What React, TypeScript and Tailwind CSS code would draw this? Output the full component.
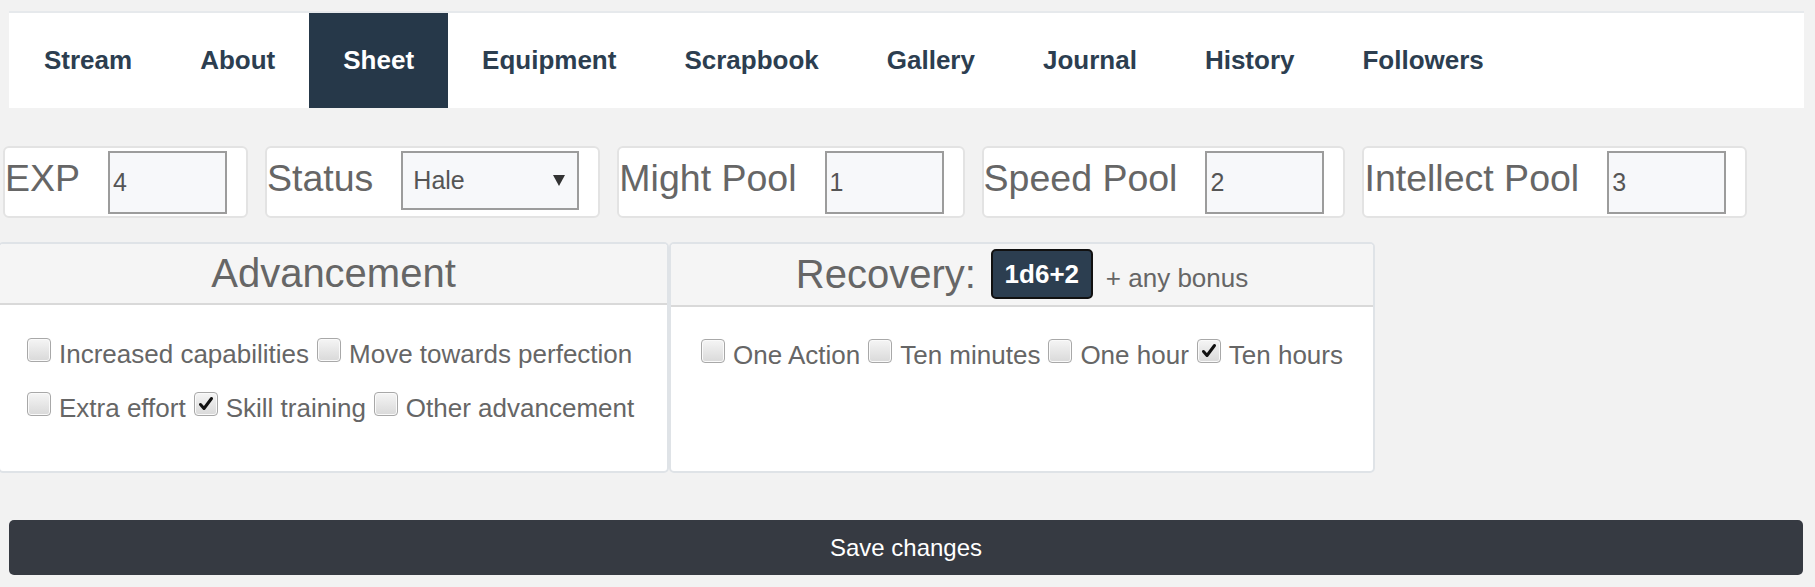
import React from "react";

const navItems = ["Stream", "About", "Sheet", "Equipment", "Scrapbook", "Gallery", "Journal", "History", "Followers"];

function Check({ checked }: { checked?: boolean }) {
  return (
    <span className="relative flex h-[24px] w-[24px] shrink-0 items-center justify-center rounded-[4px] border-[1.5px] border-[#a8a8a8] bg-gradient-to-b from-[#f5f5f5] to-[#d9d9d9] shadow-[inset_0_0_0_1px_#fafafa] mb-[9px]">
      {checked && (
        <svg width="18" height="18" viewBox="0 0 18 18">
          <path d="M3.5 9.5 L7 13.5 L14.5 3.5" fill="none" stroke="#111" strokeWidth="3" strokeLinecap="round" strokeLinejoin="round" />
        </svg>
      )}
    </span>
  );
}

function CheckItem({ label, checked }: { label: string; checked?: boolean }) {
  return (
    <span className="flex items-center gap-[8px]">
      <Check checked={checked} />
      <span className="leading-[30px]">{label}</span>
    </span>
  );
}

function StatBox({ label, value }: { label: string; value: string }) {
  return (
    <div className="flex h-[72px] items-start rounded-[6px] border-2 border-[#e3e3e3] bg-white">
      <span className="mt-[8px] text-[37.5px] leading-[44px] text-[#666]">{label}</span>
      <input
        readOnly
        defaultValue={value}
        className="ml-[28px] mr-[19px] mt-[3px] h-[63px] w-[119px] border-2 border-[#9c9c9c] bg-[#f7f8fa] pl-[3px] text-[25px] text-[#555] outline-none"
      />
    </div>
  );
}

export default function App() {
  return (
    <div className="min-h-[587px] w-full overflow-hidden bg-[#f2f2f2] pt-[11px] font-['Liberation_Sans',Arial,sans-serif]">
      {/* Nav */}
      <nav className="ml-[9px] mr-[11px] flex h-[97px] border-t-2 border-[#e6e9ec] bg-white pl-[1px]">
        {navItems.map((item) => (
          <div
            key={item}
            className={
              item === "Sheet"
                ? "flex h-full items-center bg-[#263849] px-[34px] text-[26px] font-bold text-white"
                : "flex h-full items-center px-[34px] text-[26px] font-bold text-[#2c3e50]"
            }
          >
            {item}
          </div>
        ))}
      </nav>

      {/* Stats row */}
      <div className="mt-[38px] flex gap-[17px] pl-[3px]">
        <StatBox label="EXP" value="4" />
        <div className="flex h-[72px] items-start rounded-[6px] border-2 border-[#e3e3e3] bg-white">
          <span className="mt-[8px] text-[37.5px] leading-[44px] text-[#666]">Status</span>
          <div className="ml-[28px] mr-[19px] mt-[3px] flex h-[59px] w-[178px] items-center justify-between border-2 border-[#9c9c9c] bg-[#f7f8fa] pl-[10px] pr-[12px] text-[25px] text-[#555]">
            <span>Hale</span>
            <svg width="12" height="11" viewBox="0 0 12 11">
              <polygon points="0,0 12,0 6,11" fill="#333" />
            </svg>
          </div>
        </div>
        <StatBox label="Might Pool" value="1" />
        <StatBox label="Speed Pool" value="2" />
        <StatBox label="Intellect Pool" value="3" />
      </div>

      {/* Panels */}
      <div className="-ml-[2px] mt-[24px] flex">
        <div className="flex h-[231px] w-[671px] flex-col overflow-hidden rounded-[5px] border-2 border-[#dfe3e7] bg-white">
          <div className="flex h-[61px] items-center justify-center border-b-2 border-[#d9d9d9] bg-[#f5f5f5] pb-[2px]">
            <span className="text-[40px] leading-[46px] text-[#666]">Advancement</span>
          </div>
          <div className="flex flex-col pl-[27px] pt-[22px] text-[26px] text-[#666]">
            <div className="flex h-[54px] items-center gap-[8px]">
              <CheckItem label="Increased capabilities" />
              <CheckItem label="Move towards perfection" />
            </div>
            <div className="flex h-[54px] items-center gap-[8px]">
              <CheckItem label="Extra effort" />
              <CheckItem label="Skill training" checked />
              <CheckItem label="Other advancement" />
            </div>
          </div>
        </div>
        <div className="flex h-[231px] w-[706px] flex-col overflow-hidden rounded-[5px] border-2 border-[#dfe3e7] bg-white">
          <div className="flex h-[63px] items-center justify-center border-b-2 border-[#d9d9d9] bg-[#f5f5f5] pb-[2px] text-[#666]">
            <span className="text-[40px] leading-[46px]">Recovery:</span>
            <span className="ml-[15px] flex h-[50px] w-[102px] items-center justify-center rounded-[5px] border-2 border-[#111] bg-[#2c3e50] text-[26px] font-bold leading-[30px] text-white">
              1d6+2
            </span>
            <span className="ml-[13px] mt-[9px] text-[26px] leading-[30px]">+ any bonus</span>
          </div>
          <div className="flex flex-col pl-[30px] pt-[21px] text-[26px] text-[#666]">
            <div className="flex h-[54px] items-center gap-[8px]">
              <CheckItem label="One Action" />
              <CheckItem label="Ten minutes" />
              <CheckItem label="One hour" />
              <CheckItem label="Ten hours" checked />
            </div>
          </div>
        </div>
      </div>

      {/* Save button */}
      <div className="ml-[9px] mr-[12px] mt-[47px] flex h-[55px] items-center justify-center rounded-[5px] bg-[#363a42] text-[24px] text-white">
        Save changes
      </div>
    </div>
  );
}
